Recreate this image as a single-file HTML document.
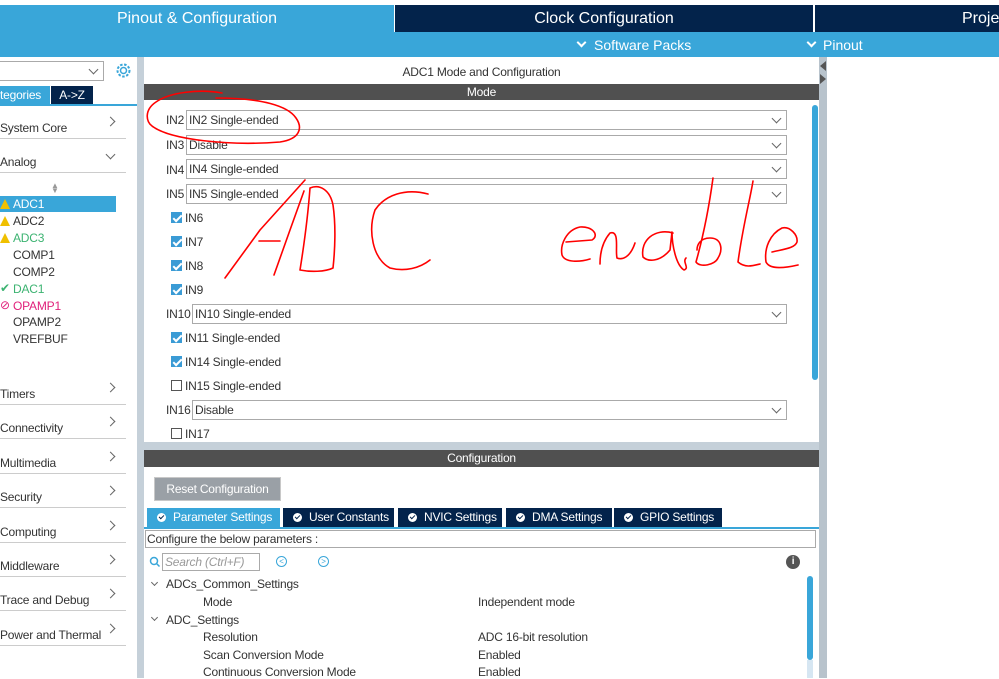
<!DOCTYPE html>
<html><head><meta charset="utf-8"><style>
*{margin:0;padding:0;box-sizing:border-box}
body{width:999px;height:678px;overflow:hidden;background:#fff;font-family:"Liberation Sans",Arial,sans-serif;font-size:12px;color:#333;position:relative;letter-spacing:-0.2px}
.a{position:absolute}
.tab{top:5px;height:27px;color:#fff;font-size:16px;text-align:center;line-height:28px;letter-spacing:0}
.sel{position:absolute;height:20px;border:1px solid #aaa;background:#fff;font-size:12px;line-height:18px;padding-left:2px;color:#333}
.sel:after{content:"";position:absolute;right:6px;top:4px;width:6px;height:6px;border-right:1px solid #666;border-bottom:1px solid #666;transform:rotate(45deg)}
.lbl{position:absolute;font-size:12px;color:#333}
.cb{position:absolute;width:11px;height:11px;background:#3a9bd5;border:1px solid #3a9bd5}
.cb:after{content:"";position:absolute;left:3px;top:0px;width:3px;height:7px;border-right:2px solid #fff;border-bottom:2px solid #fff;transform:rotate(45deg)}
.cbe{position:absolute;width:11px;height:11px;border:1px solid #555;background:#fff}
.cat{position:absolute;left:0;width:126px;font-size:12px;color:#333;border-bottom:1px solid #ccc;height:24px}
.cat i{position:absolute;right:12px;top:3px;width:7px;height:7px;border-right:1px solid #666;border-top:1px solid #666;transform:rotate(45deg)}
.it{position:absolute;left:13px;font-size:12px}
.warn{position:absolute;left:0;width:0;height:0;border-left:5px solid transparent;border-right:5px solid transparent;border-bottom:10px solid #f0c000}
.ctab{position:absolute;top:508px;height:19px;background:#03234b;color:#fff;font-size:12px;line-height:19px;padding-left:26px}
.ctab:before{content:"";position:absolute;left:10px;top:5px;width:9px;height:9px;border-radius:50%;background:#fff}
.ctab:after{content:"";position:absolute;left:13px;top:6px;width:2px;height:4px;border-right:1.5px solid #03234b;border-bottom:1.5px solid #03234b;transform:rotate(45deg)}
.pr{position:absolute;font-size:12px;color:#333}
</style></head><body>
<div class="a tab" style="left:0;width:394px;background:#39a6d9">Pinout &amp; Configuration</div>
<div class="a tab" style="left:395px;width:418px;background:#03234b">Clock Configuration</div>
<div class="a tab" style="left:815px;width:184px;background:#03234b;text-align:left;padding-left:147px">Project Manager</div>
<div class="a" style="left:0;top:32px;width:999px;height:25px;background:#39a6d9"></div>
<div class="a" style="left:578px;top:39px;width:7px;height:7px;border-right:2px solid #fff;border-bottom:2px solid #fff;transform:rotate(45deg)"></div>
<div class="a" style="left:594px;top:37px;color:#fff;font-size:14px;letter-spacing:0">Software Packs</div>
<div class="a" style="left:808px;top:39px;width:7px;height:7px;border-right:2px solid #fff;border-bottom:2px solid #fff;transform:rotate(45deg)"></div>
<div class="a" style="left:823px;top:37px;color:#fff;font-size:14px;letter-spacing:0">Pinout</div>

<div class="a" style="left:0;top:57px;width:137px;height:621px;background:#fff"></div>
<div class="sel" style="left:-2px;top:61px;width:106px;height:20px"></div>
<svg class="a" style="left:115px;top:62px" width="17" height="17" viewBox="0 0 17 17"><circle cx="8.5" cy="8.5" r="3" fill="none" stroke="#39a6d9" stroke-width="1.5"/><circle cx="8.5" cy="8.5" r="6" fill="none" stroke="#39a6d9" stroke-width="2" stroke-dasharray="2.5 1.6"/></svg>
<div class="a" style="left:0;top:86px;width:50px;height:18px;background:#39a6d9;color:#fff;line-height:18px">tegories</div>
<div class="a" style="left:51px;top:86px;width:42px;height:18px;background:#03234b;color:#fff;line-height:18px;text-align:center">A-&gt;Z</div>
<div class="a" style="left:0;top:104px;width:137px;height:2px;background:#39a6d9"></div>
<div class="cat" style="top:115px;padding-top:6px">System Core<i></i></div>
<div class="cat" style="top:149px;padding-top:6px">Analog<i style="transform:rotate(135deg);top:2px"></i></div>
<div class="a" style="left:51px;top:183px;color:#999;font-size:8px;line-height:5px">▲<br>▼</div>
<div class="a" style="left:0;top:196px;width:116px;height:16px;background:#39a6d9"></div>
<div class="warn" style="top:199px"></div>
<div class="it" style="top:197px;color:#fff">ADC1</div>
<div class="warn" style="top:216px"></div>
<div class="it" style="top:214px">ADC2</div>
<div class="warn" style="top:233px"></div>
<div class="it" style="top:231px;color:#3cb371">ADC3</div>
<div class="it" style="top:248px">COMP1</div>
<div class="it" style="top:265px">COMP2</div>
<div class="a" style="left:0;top:281px;color:#3cb371;font-size:12px">✔</div>
<div class="it" style="top:282px;color:#3cb371">DAC1</div>
<div class="a" style="left:0;top:298px;color:#e0207a;font-size:12px">⊘</div>
<div class="it" style="top:299px;color:#e0207a">OPAMP1</div>
<div class="it" style="top:315px">OPAMP2</div>
<div class="it" style="top:332px">VREFBUF</div>
<div class="cat" style="top:381px;padding-top:6px">Timers<i></i></div>
<div class="cat" style="top:415px;padding-top:6px">Connectivity<i></i></div>
<div class="cat" style="top:450px;padding-top:6px">Multimedia<i></i></div>
<div class="cat" style="top:484px;padding-top:6px">Security<i></i></div>
<div class="cat" style="top:519px;padding-top:6px">Computing<i></i></div>
<div class="cat" style="top:553px;padding-top:6px">Middleware<i></i></div>
<div class="cat" style="top:587px;padding-top:6px">Trace and Debug<i></i></div>
<div class="cat" style="top:622px;padding-top:6px">Power and Thermal<i></i></div>

<div class="a" style="left:137px;top:57px;width:7px;height:621px;background:#c5d0d9"></div>
<div class="a" style="left:144px;top:442px;width:676px;height:8px;background:#c5d0d9"></div>
<div class="a" style="left:819px;top:57px;width:8px;height:621px;background:#b8c3cc"></div>
<div class="a" style="left:820px;top:61px;width:0;height:0;border-top:5px solid transparent;border-bottom:5px solid transparent;border-right:6px solid #555"></div>
<div class="a" style="left:820px;top:74px;width:0;height:0;border-top:5px solid transparent;border-bottom:5px solid transparent;border-left:6px solid #555"></div>

<div class="a" style="left:144px;top:65px;width:675px;text-align:center;font-size:12px">ADC1 Mode and Configuration</div>
<div class="a" style="left:144px;top:84px;width:675px;height:16px;background:#505050;color:#fff;text-align:center;line-height:16px">Mode</div>
<div class="a" style="left:812px;top:105px;width:6px;height:275px;background:#39a6d9;border-radius:3px"></div>
<div class="lbl" style="left:166px;top:113px">IN2</div><div class="sel" style="left:186px;top:110px;width:601px">IN2 Single-ended</div>
<div class="lbl" style="left:166px;top:138px">IN3</div><div class="sel" style="left:186px;top:135px;width:601px">Disable</div>
<div class="lbl" style="left:166px;top:163px">IN4</div><div class="sel" style="left:186px;top:159px;width:601px">IN4 Single-ended</div>
<div class="lbl" style="left:166px;top:187px">IN5</div><div class="sel" style="left:186px;top:184px;width:601px">IN5 Single-ended</div>
<div class="cb" style="left:171px;top:212px"></div><div class="lbl" style="left:185px;top:211px">IN6</div>
<div class="cb" style="left:171px;top:236px"></div><div class="lbl" style="left:185px;top:235px">IN7</div>
<div class="cb" style="left:171px;top:260px"></div><div class="lbl" style="left:185px;top:259px">IN8</div>
<div class="cb" style="left:171px;top:284px"></div><div class="lbl" style="left:185px;top:283px">IN9</div>
<div class="lbl" style="left:166px;top:307px">IN10</div><div class="sel" style="left:192px;top:304px;width:595px">IN10 Single-ended</div>
<div class="cb" style="left:171px;top:332px"></div><div class="lbl" style="left:185px;top:331px">IN11 Single-ended</div>
<div class="cb" style="left:171px;top:356px"></div><div class="lbl" style="left:185px;top:355px">IN14 Single-ended</div>
<div class="cbe" style="left:171px;top:380px"></div><div class="lbl" style="left:185px;top:379px">IN15 Single-ended</div>
<div class="lbl" style="left:166px;top:403px">IN16</div><div class="sel" style="left:192px;top:400px;width:595px">Disable</div>
<div class="cbe" style="left:171px;top:428px"></div><div class="lbl" style="left:185px;top:427px">IN17</div>

<div class="a" style="left:144px;top:450px;width:675px;height:17px;background:#505050;color:#fff;text-align:center;line-height:17px">Configuration</div>
<div class="a" style="left:154px;top:477px;width:127px;height:24px;background:#9aa0a6;border:1px solid #c8c8c8;color:#fff;line-height:22px;text-align:center">Reset Configuration</div>
<div class="ctab" style="left:147px;width:133px;background:#39a6d9">Parameter Settings</div>
<div class="ctab" style="left:283px;width:111px">User Constants</div>
<div class="ctab" style="left:398px;width:104px">NVIC Settings</div>
<div class="ctab" style="left:506px;width:106px">DMA Settings</div>
<div class="ctab" style="left:614px;width:108px">GPIO Settings</div>
<div class="a" style="left:144px;top:527px;width:675px;height:2px;background:#39a6d9"></div>
<div class="a" style="left:145px;top:530px;width:671px;height:18px;border:1px solid #aaa;line-height:16px;padding-left:1px">Configure the below parameters :</div>
<svg class="a" style="left:149px;top:556px" width="12" height="12"><circle cx="5" cy="5" r="3.5" fill="none" stroke="#39a6d9" stroke-width="1.5"/><path d="M7.5 7.5 L10.5 10.5" stroke="#39a6d9" stroke-width="1.5"/></svg>
<div class="a" style="left:162px;top:553px;width:98px;height:18px;border:1px solid #aaa;color:#999;font-style:italic;line-height:16px;padding-left:2px">Search (Ctrl+F)</div>
<div class="a" style="left:276px;top:556px;width:11px;height:11px;border:1px solid #39a6d9;border-radius:50%;color:#39a6d9;font-size:8px;line-height:9px;text-align:center">&lt;</div>
<div class="a" style="left:318px;top:556px;width:11px;height:11px;border:1px solid #39a6d9;border-radius:50%;color:#39a6d9;font-size:8px;line-height:9px;text-align:center">&gt;</div>
<div class="a" style="left:786px;top:555px;width:14px;height:14px;border-radius:50%;background:#555;color:#fff;font-size:10px;font-weight:bold;text-align:center;line-height:14px">i</div>
<div class="a" style="left:807px;top:576px;width:6px;height:84px;background:#39a6d9;border-radius:3px"></div>
<div class="a" style="left:807px;top:660px;width:6px;height:18px;background:#d6e6f2"></div>
<div class="a" style="left:152px;top:580px;width:5px;height:5px;border-right:1px solid #666;border-bottom:1px solid #666;transform:rotate(45deg)"></div><div class="pr" style="left:166px;top:577px">ADCs_Common_Settings</div>
<div class="pr" style="left:203px;top:595px">Mode</div><div class="pr" style="left:478px;top:595px">Independent mode</div>
<div class="a" style="left:152px;top:615px;width:5px;height:5px;border-right:1px solid #666;border-bottom:1px solid #666;transform:rotate(45deg)"></div><div class="pr" style="left:166px;top:613px">ADC_Settings</div>
<div class="pr" style="left:203px;top:630px">Resolution</div><div class="pr" style="left:478px;top:630px">ADC 16-bit resolution</div>
<div class="pr" style="left:203px;top:648px">Scan Conversion Mode</div><div class="pr" style="left:478px;top:648px">Enabled</div>
<div class="pr" style="left:203px;top:665px">Continuous Conversion Mode</div><div class="pr" style="left:478px;top:665px">Enabled</div>

<svg class="a" style="left:0;top:0" width="999" height="678" fill="none" stroke="#f00" stroke-width="1.6" stroke-linecap="round" stroke-linejoin="round">
<path d="M222 93 C200 89 170 92 156 102 C144 110 146 122 152 126 C170 140 230 146 280 142 C300 139 303 128 296 118 C288 106 262 98 216 98"/>
<path d="M225 278 L260 230 L305 180 M304 191 L290 230 L274 275 M259 241 L280 241"/>
<path d="M300 270 C304 245 308 215 310 188 C320 184 330 190 333 205 C336 225 335 250 333 268 C325 272 310 272 300 270"/>
<path d="M428 194 C405 188 385 195 375 210 C368 230 372 258 390 268 C405 272 420 268 430 260"/>
<path d="M566 242 L592 240 C600 235 592 226 580 227 C566 230 560 245 562 255 C565 263 580 262 590 259"/>
<path d="M600 264 C600 250 604 240 610 233 C620 230 615 250 617 258 C622 260 630 258 635 243"/>
<path d="M673 233 C655 228 640 240 643 257 C648 262 660 262 670 250 L672 232 C672 245 676 265 684 270 C690 268 682 262 686 258"/>
<path d="M713 178 C710 200 705 230 696 262 M696 262 C700 268 715 265 718 258 C723 250 722 238 710 238 C700 238 697 245 697 250"/>
<path d="M753 181 C750 200 743 225 738 262 C745 268 752 266 760 264"/>
<path d="M772 252 C785 249 795 248 797 242 C798 235 790 226 782 228 C770 234 764 248 766 262 C770 270 785 268 798 265"/>
</svg>
</body></html>
